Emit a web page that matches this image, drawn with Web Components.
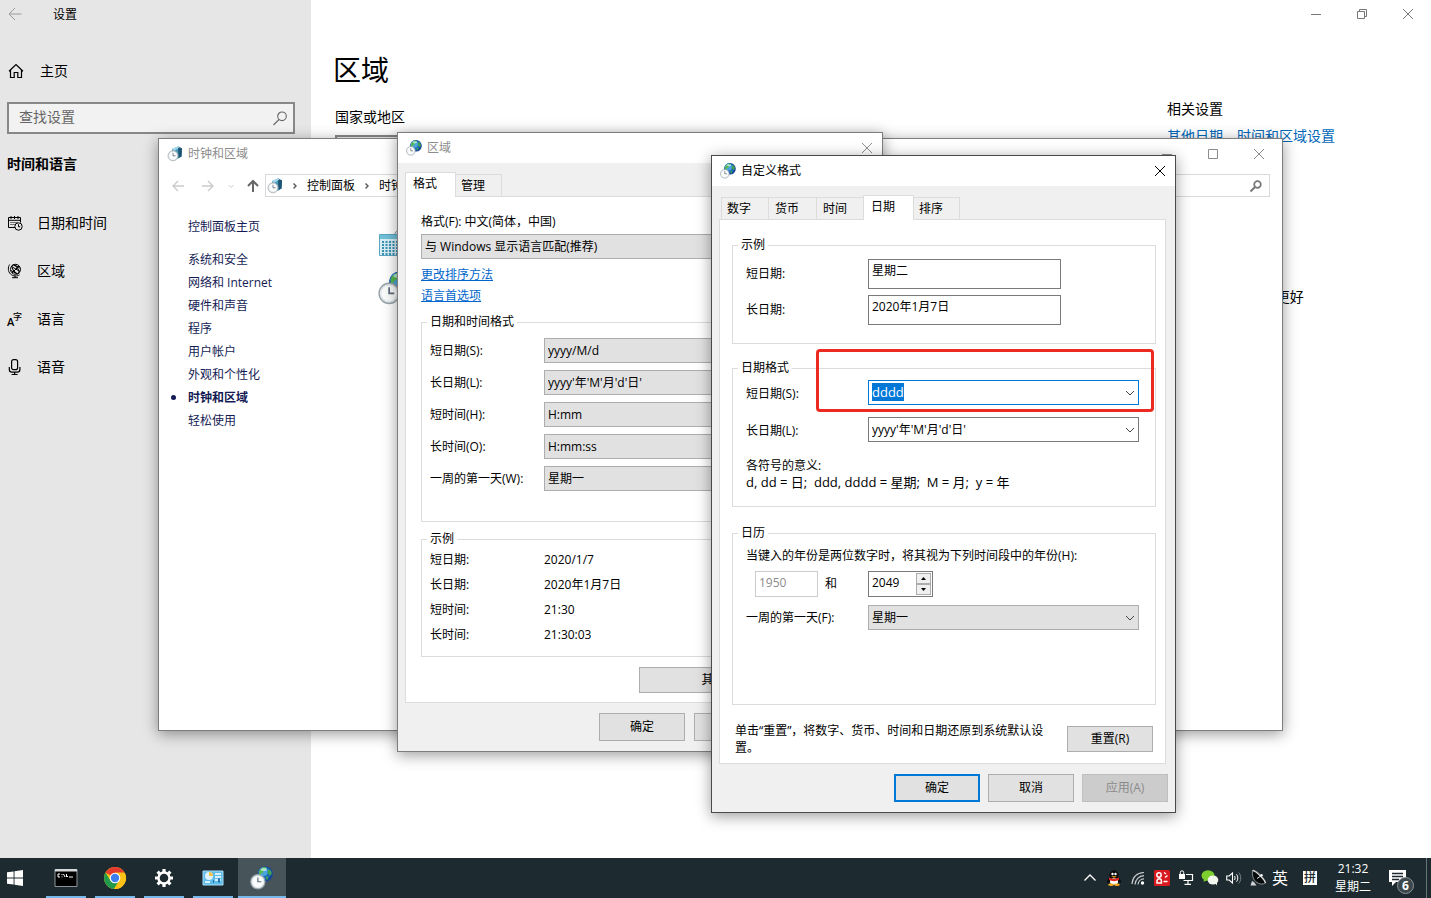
<!DOCTYPE html>
<html lang="zh-CN">
<head>
<meta charset="utf-8">
<title>设置</title>
<style>
  html, body { margin: 0; height: 100%; overflow: hidden; background: #fff; }
  body { font: 12px/18px "Open Sans", "Noto Sans CJK SC", sans-serif; color: #000; }
</style>
</head>
<body>
<desk-top></desk-top>
<script>
const BASE = `*{box-sizing:border-box} button,input,select{font:inherit;color:inherit;margin:0;border-radius:0;outline:0}
button{background:none;border:0;padding:0} a{color:inherit} [hidden]{display:none}`;

function define(name, css, html, setup) {
  const tpl = document.createElement('template');
  tpl.innerHTML = typeof html === 'string' ? `<style>${BASE}${css}</style>${html}` : '';
  customElements.define(name, class extends HTMLElement {
    connectedCallback() {
      if (this.shadowRoot) return;
      const root = this.attachShadow({ mode: 'open' });
      if (typeof html === 'string') root.append(tpl.content.cloneNode(true));
      else root.innerHTML = `<style>${BASE}${css}</style>${html(this)}`;
      if (setup) setup(this, root);
    }
  });
}

/* ---------- icons: [viewBox size, markup] ---------- */
const clockFace = (x, y, r) => `<circle cx="${x}" cy="${y}" r="${r}" fill="#e3e9ec" stroke="#9aa5ab" stroke-width="${r / 7}"/>
  <circle cx="${x}" cy="${y}" r="${r * .76}" fill="#fbfcfc"/>
  <path d="M${x} ${y - r * .6}V${y}H${x + r * .5}" fill="none" stroke="#5b6a78" stroke-width="${r / 6}"/>`;
const globe = (x, y, r) => `<circle cx="${x}" cy="${y}" r="${r}" fill="#14479a"/>
  <circle cx="${x - r * .12}" cy="${y - r * .12}" r="${r * .84}" fill="#1f6cbd"/>
  <circle cx="${x - r * .25}" cy="${y - r * .28}" r="${r * .58}" fill="#4aa5de"/>
  <g transform="translate(${x - r} ${y - r}) scale(${r / 10})"><path d="M1.500 7C3 3 7 .8 10 1l2 1.500-2 2-2 .5-1 3-2.500 1-1 3-2-.5z" fill="#55b84c"/>
  <path d="M13.500 4l3 .5 2 3.500-.5 3-2 1-3-3zM11 13l3 1-1 4-2-1z" fill="#3f9f52"/><ellipse cx="8" cy="4" rx="4" ry="2" fill="#d6f2fb" opacity=".7"/></g>`;
const line = (d, w = 1, extra = '') => `<path d="${d}" fill="none" stroke="currentColor" stroke-width="${w}" ${extra}/>`;
const ICONS = {
  back: [16, line('M14.5 8H2M8 2L2 8l6 6')],
  navback: [16, line('M14 8H3M8 3L3 8l5 5', 1.4)],
  navfwd: [16, line('M2 8h11M8 3l5 5-5 5', 1.4)],
  navup: [16, line('M8 14V3M3 8l5-5 5 5', 2)],
  minichev: [8, line('M1.500 3L4 5.500 6.500 3', 1)],
  crumb: [8, line('M2.500 1.500L5 4 2.500 6.500', 1.4)],
  min: [12, line('M1 6.500h10')],
  max: [12, line('M1.500 1.500h9v9h-9z')],
  restore: [12, line('M1.500 3.500h7v7h-7zM3.500 3.500v-2h7v7h-2')],
  close: [12, line('M1 1l10 10M11 1L1 11')],
  chev: [12, line('M2 4l4 4 4-4')],
  home: [16, line('M1 8.300L8 1.500l7 6.800M2.500 7v7.500h3.700V9.500h3.600v5h3.700V7', 1.2)],
  search: [16, line('M7 9.500L1.500 15', 1.1) + '<circle cx="10" cy="6.300" r="4.300" fill="none" stroke="currentColor" stroke-width="1.100"/>'],
  searchb: [14, line('M6 8L1.500 12.500', 2) + '<circle cx="8.500" cy="5.500" r="3.300" fill="none" stroke="currentColor" stroke-width="1.700"/>'],
  date: [16, line('M8.500 12.500H1.500v-10h12v5M1.500 5.300h12M4 1v3M7.500 1v3M11 1v3') + line('M3.500 7.500h7M3.500 9.500h5', 1, 'stroke-dasharray="1 1"') + '<circle cx="11.500" cy="11.500" r="3.700" fill="#e6e6e6" stroke="currentColor"/>' + line('M11.500 9.300v2.500h1.700')],
  region: [16, '<g fill="none" stroke="currentColor"><circle cx="8.500" cy="6.300" r="5"/><ellipse cx="8.500" cy="6.300" rx="2.300" ry="5" transform="rotate(-35 8.500 6.300)"/><path d="M4.500 3.500l8.500 5M3.800 7.500l6.500 3.500M7 1.500l5.800 3.500M12 3L5 10"/><path d="M2.700 1.500C.8 4 .8 8.500 3.500 11s6.500 2.500 9 .8M8 12.700v2M5 14.700h6"/></g>'],
  lang: [16, '<text x="0" y="15" font-size="11" font-weight="600" fill="currentColor" font-family="Open Sans">A</text><text x="6" y="9" font-size="9" fill="currentColor" font-weight="500" font-family="Noto Sans CJK SC">字</text>'],
  mic: [16, '<rect x="4.600" y=".7" width="6" height="10" rx="2" fill="none" stroke="currentColor" stroke-width="1.200"/>' + line('M2.300 8v2.500c0 1.700 1 2.700 2.600 2.700h5.400c1.600 0 2.600-1 2.600-2.700V8M7.600 13.200v2.300M4.600 15.500h6', 1.2)],
  clockregion: [16, globe(10, 5.800, 5.800) + clockFace(4.800, 10.800, 4.400)],
  clockbox: [16, '<path d="M5 3l6-2.500 4 2-.5 8-4 2.500-5-3z" fill="#4b9dbd"/><path d="M11 .5l4 2-.5 8-3 1.500z" fill="#1d5473"/><path d="M5 3l6-2.500 1.500 1L7 5z" fill="#a4d8e8"/>' + clockFace(6, 9.800, 5)],
  calendar: [32, '<circle cx="24" cy="10" r="8" fill="#e8eef0" stroke="#8f9ca3"/><path d="M1.500 7.500h26v21h-26z" fill="#d9eef6" stroke="#5aa5c0"/><path d="M2 8h25v4H2z" fill="#6fc0d8"/><path d="M4 15h20M4 18h20M4 21h20M4 24h20M4 27h20" stroke="#3992b4" stroke-width="2" stroke-dasharray="2 1.500"/>'],
  globeclock: [32, globe(20.500, 10.500, 10) + clockFace(10.500, 21, 9.500)],
  winlogo: [16, '<path d="M0 2.300L6.600 1.400v6.100H0zM7.500 1.300L16 0v7.500H7.500zM0 8.400h6.600v6.200L0 13.700zM7.500 8.400H16V16l-8.500-1.200z" fill="#fff"/>'],
  cmd: [24, '<path d="M1 3.500h22v17H1z" fill="#000" stroke="#8c9599"/><path d="M1 3h22v2.500H1z" fill="#d5d9db"/><path d="M6 8H4v3h2M8 8v1M8 10.500v.8M9.500 8l1.500 3M12.500 8v3M13 10.500h1M15 11h4" stroke="#fff" fill="none"/>'],
  chrome: [24, '<circle cx="12" cy="12" r="11" fill="#fbc116"/><path d="M12 12L2.500 6.500A11 11 0 0 1 21.500 6.500H12z" fill="#e33b2e"/><path d="M2.500 6.500A11 11 0 0 0 11 23l5.500-8.500L12 12 7.500 14.800z" fill="#229a4c"/><path d="M12 7h9.800A11 11 0 0 1 11 23l5.300-8.500z" fill="#fbc116"/><circle cx="12" cy="12" r="5.300" fill="#fff"/><circle cx="12" cy="12" r="4.200" fill="#3c7ef0"/>'],
  gear: [24, '<circle cx="12" cy="12" r="5.500" fill="none" stroke="#fff" stroke-width="2.400"/><g stroke="#fff" stroke-width="3.200"><path d="M12 3v3M12 18v3M3 12h3M18 12h3M5.600 5.600l2.200 2.200M16.200 16.200l2.200 2.200M18.400 5.600l-2.200 2.200M7.800 16.200l-2.200 2.200"/></g>'],
  panel: [24, '<path d="M2 5h20v14H2z" fill="#5fbdea" stroke="#a9def6"/><circle cx="8" cy="10" r="4" fill="#dff3fc"/><path d="M8 10V6a4 4 0 0 1 4 4z" fill="#f5c34a"/><path d="M14 8h6M14 11h6M14 14h6M4 16h5" stroke="#fff" stroke-width="1.500"/><path d="M17 12.500h2v4h-2zM12 14h1v3h-1z" fill="#1f73b7"/>'],
  up: [16, line('M2.500 10.500L8 5l5.500 5.500', 1.3)],
  qq: [16, '<ellipse cx="8" cy="5.500" rx="4.500" ry="5.300" fill="#0b0b0b"/><path d="M3 8c-2 2-2.500 4.500-1.500 5L4 12h8l2.500 1c1-.5.500-3-1.500-5z" fill="#0b0b0b"/><ellipse cx="8" cy="11.500" rx="4" ry="3.300" fill="#fff"/><circle cx="6.500" cy="4" r="1.200" fill="#fff"/><circle cx="9.500" cy="4" r="1.200" fill="#fff"/><path d="M5 6.300h6L8 7.800z" fill="#f5a81c"/><path d="M3 7.500c3 1.800 7 1.800 10 0v2.500c-3 1.500-7 1.500-10 0z" fill="#e5261f"/><ellipse cx="5" cy="14.800" rx="2.800" ry="1.200" fill="#f5a81c"/><ellipse cx="11" cy="14.800" rx="2.800" ry="1.200" fill="#f5a81c"/>'],
  wifi: [16, '<g fill="none" stroke="#c8cdcf" stroke-width="1.200"><path d="M2 14C2.500 7 7 3 14 2.500"/><path d="M5 14.500C5.300 9.500 9 6 14 5.700"/><path d="M8 14.500C8.200 11.500 10.500 9 14 8.900"/></g><circle cx="12.500" cy="13" r="1.700" fill="#fff"/>'],
  red: [16, '<rect width="16" height="16" rx="1.500" fill="#d8191f"/><g fill="none" stroke="#fff" stroke-width="1.500"><circle cx="5" cy="5" r="2.200"/><path d="M10 2.500l2 1.500M13.500 5.500l-2.500 2M3 13v-2a2.200 2.200 0 0 1 4.400 0v2zM9.500 11.500h4"/></g>'],
  net: [16, '<g fill="none" stroke="#fff" stroke-width="1.200"><path d="M8 4.500h6.500v6H5.500M10 10.500v3.500M6.500 14.400h6.500"/></g><path d="M1 4h6v5H1z" fill="#fff"/><path d="M2.300 4.500V2.500a1.700 1.700 0 0 1 3.400 0v2" stroke="#fff" fill="none"/>'],
  wechat: [18, '<ellipse cx="7" cy="6.500" rx="6.500" ry="5.300" fill="#7ccf2e"/><path d="M3 10l-.500 3L6 11z" fill="#7ccf2e"/><ellipse cx="12" cy="11" rx="5.300" ry="4.500" fill="#f2f7ee"/><path d="M14 14l2 2.500V13z" fill="#f2f7ee"/>'],
  vol: [16, line('M.7 6h2.500L6.500 3v10L3.200 10H.7z', 1.1) + line('M8.500 6c.8 1.200.8 2.800 0 4M10.500 4.300c1.800 2.200 1.800 5.200 0 7.400', 1) + '<path d="M12.700 2.500c2.700 3.200 2.700 7.800 0 11" stroke="#76828a" fill="none"/>'],
  dish: [18, '<path d="M4 1C2.500 6 4 11 8 13.500c3 2 6 2 8.500.5C17 11 9 2 4 1z" fill="#070a0b" stroke="#b9bfc2" stroke-width=".7"/><path d="M3.500 1.500C7 2 15 10 16.500 14" fill="none" stroke="#eee" stroke-width="1.100"/><path d="M8 9.500l4.500-3" stroke="#ddd"/><circle cx="12.500" cy="6.300" r="1.200" fill="#fff"/><path d="M3 12l-1.500 4.500h6L5 13z" fill="#cfd3d5"/>'],
  note: [20, '<path d="M1 2h17v12H8l-4 4v-4H1z" fill="#fff"/><path d="M4 5.500h11M4 8.500h11M4 11.500h7" stroke="#1d2b30" stroke-width="1.300"/>']
};
define('ui-icon', ':host{display:inline-block;flex:none;line-height:0}svg{display:block;overflow:visible}', el => {
  const [box, body] = ICONS[el.getAttribute('name')];
  const size = el.getAttribute('size') || box;
  return `<svg width="${size}" height="${size}" viewBox="0 0 ${box} ${box}" aria-hidden="true">${body}</svg>`;
});

/* ---------- shared window parts ---------- */
define('win-frame', `
  :host{display:flex;flex-direction:column;background:var(--body,#f0f0f0);border:1px solid var(--edge,#7d7d7d);box-shadow:0 3px 14px rgba(0,0,0,.4)}
  header{display:flex;align-items:center;height:30px;flex:none;background:#fff;padding-left:8px;gap:5px;color:var(--title,#8c8c8c)}
  h2{font:inherit;margin:0;flex:1}
  header>ui-icon{margin-bottom:1px}
  .ctl{display:flex}
  button{width:var(--ctl,30px);height:29px;display:grid;place-items:center}
  main{flex:1;display:flex;flex-direction:column;min-height:0}`,
  el => `<header><ui-icon name="${el.getAttribute('icon')}"></ui-icon><h2>${el.getAttribute('heading')}</h2>
    <div class="ctl">${(el.getAttribute('controls') || 'close').split(' ').map(c => `<button aria-label="${c}"><ui-icon name="${c}"></ui-icon></button>`).join('')}</div></header>
    <main><slot></slot></main>`);

define('tab-page', `
  :host{display:flex;flex-direction:column;flex:1;margin:9px 9px 0 7px}
  nav{display:flex;align-items:flex-end;height:24px;padding-left:2px}
  button{height:22px;border:1px solid #dcdcdc;border-bottom:0;padding:0 17px 0 5px;text-align:left;line-height:21px}
  button+button{border-left:0;padding-left:6px}
  button.on{position:relative;height:25px;margin:0 -2px -1px;padding:0 18px 3px 7px;background:#fff;border-left:1px solid #dcdcdc}
  button.on+button{padding-left:7px;padding-right:16px}
  section{flex:1;border:1px solid #dcdcdc;background:#fff;padding:var(--pad);display:flex;flex-direction:column}`,
  el => `<nav role="tablist">${el.getAttribute('tabs').split(' ').map(t => {
    const on = t === el.getAttribute('active');
    return `<button role="tab" aria-selected="${on}" class="${on ? 'on' : ''}">${t}</button>`; }).join('')}</nav><section><slot></slot></section>`);

define('group-box', `
  :host{display:block}
  fieldset{margin:0;min-width:0;height:100%;border:1px solid #dcdcdc;padding:0 5px}
  legend{padding:0 3px;line-height:16px}
  div{display:flex;flex-direction:column;padding:var(--inset)}`,
  el => `<fieldset><legend>${el.getAttribute('legend')}</legend><div><slot></slot></div></fieldset>`);

define('push-button', `
  :host{display:block;width:86px;height:28px}
  button{width:100%;height:100%;background:#e1e1e1;border:1px solid #adadad;line-height:18px}
  :host([primary]) button{border:2px solid #0078d7}
  button:disabled{background:#ccc;border-color:#bfbfbf;color:#8b8b8b}`,
  el => `<button ${el.hasAttribute('off') ? 'disabled' : ''}><slot></slot></button>`);

define('form-row', `
  :host{display:grid;grid-template-columns:var(--label,122px) 1fr;align-items:center}
  :host([kind=combo]) label{padding-top:3px}
  .box{display:grid;width:var(--control,auto);height:25px}
  .box>*{grid-area:1/1}
  .box ui-icon{justify-self:end;align-self:center;margin-right:3px;color:#444;pointer-events:none}
  select{appearance:none;width:100%;height:25px;background:#e1e1e1;border:1px solid #adadad;padding:0 20px 0 3px}
  input{width:100%;height:25px;background:#fff;border:1px solid #7a7a7a;padding:0 20px 2px 3px}
  input.focus{border-color:#0078d7;font-size:13px}
  input::selection{background:#0078d7;color:#fff}
  .sample input{padding:0 3px 8px;height:30px}
  .sample{width:193px;height:30px}
  .box button{width:20px;justify-self:end}
  output{display:block;line-height:25px}`,
  el => {
    const label = el.getAttribute('label'), value = el.getAttribute('value'), kind = el.getAttribute('kind') || 'select';
    const control = {
      select: `<div class="box"><select id="c"><option>${value}</option></select><ui-icon name="chev"></ui-icon></div>`,
      combo: `<div class="box"><input id="c" type="text" value="${value}" role="combobox" aria-expanded="false"><button aria-label="展开"></button><ui-icon name="chev"></ui-icon></div>`,
      sample: `<div class="box sample"><input id="c" type="text" readonly value="${value}"></div>`,
      text: `<output id="c">${value}</output>`
    }[kind];
    return `<label for="c">${label}</label>${control}`;
  },
  (el, root) => {
    if (!el.hasAttribute('selected')) return;
    const input = root.querySelector('input');
    input.classList.add('focus');
    input.focus();
    input.select();
  });

define('year-range', `
  :host{display:grid;grid-template-columns:122px 1fr;align-items:center}
  .from{display:flex;align-items:center;gap:7px;padding-left:9px}
  input{height:26px;border:1px solid #7a7a7a;background:#fff;padding:0 3px 4px}
  .from input{width:63px;border-color:#ccc;color:#8b8b8b}
  .spin{display:flex;width:65px;height:26px;border:1px solid #7a7a7a}
  .spin input{flex:1;width:0;height:24px;border:0}
  .keys{display:grid;grid-template-rows:1fr 1fr;width:17px;padding:1px}
  .keys button{background:#f0f0f0;border:1px solid #adadad;display:grid;place-items:center}
  svg{display:block}`,
  `<div class="from"><input type="text" value="1950" disabled aria-label="起始年份"><label for="y">和</label></div>
   <div class="spin"><input id="y" type="text" value="2049"><div class="keys">
   <button aria-label="增加"><svg width="5" height="3"><path d="M0 3L2.500 0 5 3z"/></svg></button>
   <button aria-label="减少"><svg width="5" height="3"><path d="M0 0h5L2.500 3z"/></svg></button></div></div>`);

/* ---------- settings window ---------- */
define('nav-item', `
  :host{display:block;height:48px}
  a{display:flex;align-items:center;gap:14px;height:100%;padding-left:7px;text-decoration:none;font-size:14px}`,
  el => `<a href="#"><ui-icon name="${el.getAttribute('icon')}"></ui-icon><slot></slot></a>`);

define('settings-app', `
  :host{display:flex;font-size:14px;line-height:20px;background:#fff}
  .side{width:311px;background:#e6e6e6;flex:none}
  .cap{display:flex;align-items:center;height:28px;padding-left:7px;gap:30px;font-size:12px}
  .cap ui-icon{color:#999}
  .cap span{padding-top:1px}
  .home{display:flex;align-items:center;height:48px;margin-top:19px;padding-left:8px;gap:16px;text-decoration:none}
  .find{display:flex;align-items:center;height:32px;margin:7px 16px 20px 7px;border:2px solid #888;background:#f2f2f2;padding:0 5px 0 10px;color:#666}
  .find input{flex:1;min-width:0;border:0;background:none;padding:0 0 2px}
  .find input::placeholder{color:#666;opacity:1}
  h3{margin:0 0 25px 7px;font-size:14px;line-height:20px;font-weight:700}
  .page{flex:1;display:flex;flex-direction:column;min-width:0}
  .ctl{display:flex;justify-content:flex-end;height:28px;color:#777}
  .ctl button{width:46px;display:grid;place-items:center}
  .cols{display:flex;flex:1}
  .body{flex:1;padding-left:24px}
  h1{font-size:28px;line-height:40px;font-weight:400;margin:22px 0 17px -2px}
  .body select{display:block;appearance:none;width:280px;height:32px;margin-top:8px;border:2px solid #888;background:#f2f2f2}
  aside{width:264px;padding-top:71px}
  aside p{margin:0}
  aside a{display:block;color:#0067b8;text-decoration:none;margin:7px 0 141px}`,
  `<div class="side">
     <div class="cap"><ui-icon name="back"></ui-icon><span>设置</span></div>
     <a class="home" href="#"><ui-icon name="home"></ui-icon>主页</a>
     <div class="find"><input type="text" placeholder="查找设置" aria-label="查找设置"><ui-icon name="search"></ui-icon></div>
     <h3>时间和语言</h3>
     <nav><nav-item icon="date">日期和时间</nav-item><nav-item icon="region">区域</nav-item><nav-item icon="lang">语言</nav-item><nav-item icon="mic">语音</nav-item></nav>
   </div>
   <div class="page">
     <div class="ctl"><button aria-label="最小化"><ui-icon name="min"></ui-icon></button><button aria-label="还原"><ui-icon name="restore"></ui-icon></button><button aria-label="关闭"><ui-icon name="close"></ui-icon></button></div>
     <div class="cols">
       <div class="body"><h1>区域</h1><label for="country">国家或地区</label><select id="country"></select></div>
       <aside><p>相关设置</p><a href="#">其他日期、时间和区域设置</a><p>使 Windows 变得更好</p></aside>
     </div>
   </div>`);

/* ---------- control panel window ---------- */
define('control-panel', `
  :host{display:block}
  win-frame{height:100%;--body:#fff;--ctl:46px}
  .bar{display:flex;margin:5px 12px 0 11px;height:23px;color:#ccc}
  .keys{display:flex;align-items:center;gap:14px;width:95px;flex:none}
  .keys button{display:grid}
  .keys button:nth-child(3){margin:0 -4px 0 -3px}
  .keys button:nth-child(4){color:#666}
  .addr{flex:1;display:flex;align-items:center;gap:8px;border:1px solid #d9d9d9;padding-left:1px;color:#000;white-space:nowrap}
  .addr ui-icon[name=crumb]{color:#555}
  .addr a{text-decoration:none}
  .find{display:flex;align-items:center;width:200px;border:1px solid #d9d9d9;margin-left:12px;padding-right:6px;color:#777}
  .find input{flex:1;min-width:0;border:0;background:none}
  .cols{display:flex}
  nav{width:219px;padding:18px 0 0 29px;line-height:23px;color:#151c55}
  nav a{display:block;text-decoration:none;width:max-content}
  nav a:first-child{margin-bottom:10px}
  nav .on{font-weight:700;display:flex;align-items:center;margin-left:-17px;gap:12px}
  nav .on::before{content:"";width:5px;height:5px;border-radius:50%;background:#151c55}
  .apps{display:flex;flex-direction:column;gap:12px;padding-top:30px}`,
  `<win-frame icon="clockbox" heading="时钟和区域" controls="min max close">
    <div class="bar"><div class="keys"><button aria-label="后退"><ui-icon name="navback"></ui-icon></button><button aria-label="前进"><ui-icon name="navfwd"></ui-icon></button><button aria-label="最近"><ui-icon name="minichev"></ui-icon></button><button aria-label="向上"><ui-icon name="navup"></ui-icon></button></div>
      <div class="addr"><ui-icon name="clockbox"></ui-icon><ui-icon name="crumb"></ui-icon><a href="#">控制面板</a><ui-icon name="crumb"></ui-icon><a href="#">时钟和区域</a></div>
      <div class="find"><input type="text" aria-label="搜索控制面板"><ui-icon name="searchb"></ui-icon></div></div>
    <div class="cols"><nav><a href="#">控制面板主页</a><a href="#">系统和安全</a><a href="#">网络和 Internet</a><a href="#">硬件和声音</a><a href="#">程序</a><a href="#">用户帐户</a><a href="#">外观和个性化</a><a href="#" class="on">时钟和区域</a><a href="#">轻松使用</a></nav>
      <div class="apps"><ui-icon name="calendar"></ui-icon><ui-icon name="globeclock" size="34"></ui-icon></div></div>
  </win-frame>`);

/* ---------- region dialog ---------- */
define('region-dialog', `
  :host{display:block}
  win-frame{height:100%}
  tab-page{--pad:16px 15px 9px}
  .fmt select{appearance:none;display:block;width:100%;height:25px;margin:3px 0 5px;background:#e1e1e1;border:1px solid #adadad;padding:0 3px}
  .links a{display:block;width:max-content;line-height:21px;color:#0066cc}
  form-row{--label:114px}
  .a{margin-top:8px;height:208px;--inset:8px 3px 0}
  .a form-row+form-row{margin-top:7px}
  .b{margin-top:9px;height:126px;--inset:0 3px}
  .more{width:198px;height:26px;margin:10px 20px 0 auto}
  footer{display:flex;justify-content:flex-end;gap:9px;padding:10px 7px}`,
  `<win-frame icon="clockregion" heading="区域">
    <tab-page tabs="格式 管理" active="格式">
      <div class="fmt"><label for="f">格式(F): 中文(简体，中国)</label><select id="f"><option>与 Windows 显示语言匹配(推荐)</option></select></div>
      <div class="links"><a href="#">更改排序方法</a><a href="#">语言首选项</a></div>
      <group-box class="a" legend="日期和时间格式">
        <form-row label="短日期(S):" value="yyyy/M/d"></form-row><form-row label="长日期(L):" value="yyyy'年'M'月'd'日'"></form-row>
        <form-row label="短时间(H):" value="H:mm"></form-row><form-row label="长时间(O):" value="H:mm:ss"></form-row>
        <form-row label="一周的第一天(W):" value="星期一"></form-row>
      </group-box>
      <group-box class="b" legend="示例">
        <form-row kind="text" label="短日期:" value="2020/1/7"></form-row><form-row kind="text" label="长日期:" value="2020年1月7日"></form-row>
        <form-row kind="text" label="短时间:" value="21:30"></form-row><form-row kind="text" label="长时间:" value="21:30:03"></form-row>
      </group-box>
      <push-button class="more">其他设置(D)...</push-button>
    </tab-page>
    <footer><push-button>确定</push-button><push-button>取消</push-button><push-button>应用(A)</push-button></footer>
  </win-frame>`);

/* ---------- customize format dialog ---------- */
define('format-dialog', `
  :host{display:block}
  win-frame{height:100%;--title:#000;--edge:#4a4a4a}
  tab-page{--pad:17px 9px 6px 12px}
  .a{--inset:6px 8px 18px}
  .a form-row+form-row{margin-top:6px}
  .b{margin-top:16px;--inset:4px 11px 15px 8px}
  .b form-row+form-row{margin-top:12px}
  .c{margin-top:18px;height:180px;--inset:6px 11px 0 8px}
  .help{margin:0;line-height:17px;white-space:pre}
  .lead{margin-top:15px}
  .key{font-size:13px}
  .c p{margin:0 0 6px}
  .c form-row{margin-top:8px}
  .reset{display:flex;align-items:center;justify-content:space-between;padding:0 3px;margin-top:17px}
  .reset p{margin:0;width:312px;line-height:17px}
  .reset push-button{height:26px}
  footer{display:flex;justify-content:flex-end;gap:8px;padding:10px 7px}
  .mark{position:absolute;left:105px;top:194px;width:338px;height:63px;border:3px solid #ec2a22;border-radius:4px;pointer-events:none}`,
  `<win-frame icon="clockregion" heading="自定义格式">
    <tab-page tabs="数字 货币 时间 日期 排序" active="日期">
      <group-box class="a" legend="示例"><form-row kind="sample" label="短日期:" value="星期二"></form-row><form-row kind="sample" label="长日期:" value="2020年1月7日"></form-row></group-box>
      <group-box class="b" legend="日期格式"><form-row kind="combo" selected label="短日期(S):" value="dddd"></form-row><form-row kind="combo" label="长日期(L):" value="yyyy'年'M'月'd'日'"></form-row>
        <p class="help lead">各符号的意义:</p><p class="help key">d, dd = 日;  ddd, dddd = 星期;  M = 月;  y = 年</p></group-box>
      <group-box class="c" legend="日历"><p>当键入的年份是两位数字时，将其视为下列时间段中的年份(H):</p><year-range></year-range><form-row label="一周的第一天(F):" value="星期一"></form-row></group-box>
      <div class="reset"><p>单击“重置”，将数字、货币、时间和日期还原到系统默认设置。</p><push-button>重置(R)</push-button></div>
    </tab-page>
    <footer><push-button primary>确定</push-button><push-button>取消</push-button><push-button off>应用(A)</push-button></footer>
  </win-frame><div class="mark"></div>`);

/* ---------- task bar ---------- */
define('task-bar', `
  :host{display:flex;justify-content:space-between;height:40px;background:#1d2b30;color:#fff}
  .apps,.tray{display:flex}
  button{display:grid;place-items:center}
  .start{width:30px;margin-right:12px}
  .app{width:48px;margin-right:1px;position:relative}
  .app::after{content:"";position:absolute;left:4px;right:4px;bottom:0;height:2px;background:#76b9ed}
  .app.on{background:#47545a}
  .app.on::after{left:0;right:0}
  .t{width:24px}
  .ime{width:20px;font-size:16px}
  .pin{width:40px}
  .pin span{width:14px;height:14px;background:#fff;color:#1d2b30;line-height:14px;font-weight:500}
  .clock{width:46px;line-height:18px;white-space:nowrap}
  .note{width:50px;position:relative;padding-right:6px}
  .note b{position:absolute;left:21px;top:19px;width:17px;height:17px;border-radius:50%;background:#3c474c;border:1px solid #8b9397;font-size:12px;line-height:15px}
  .peek{width:5px;border-left:1px solid #66737a}`,
  `<div class="apps"><button class="start" aria-label="开始"><ui-icon name="winlogo"></ui-icon></button>
    ${['cmd', 'chrome', 'gear', 'panel'].map(n => `<button class="app" aria-label="${n}"><ui-icon name="${n}"></ui-icon></button>`).join('')}
    <button class="app on" aria-label="区域"><ui-icon name="globeclock" size="24"></ui-icon></button></div>
   <div class="tray">${['up', 'qq', 'wifi', 'red', 'net', 'wechat', 'vol', 'dish'].map(n => `<button class="t" aria-label="${n}"><ui-icon name="${n}"></ui-icon></button>`).join('')}
    <button class="ime">英</button><button class="pin"><span>拼</span></button>
    <button class="clock"><span>21:32<br>星期二</span></button>
    <button class="note" aria-label="通知"><ui-icon name="note"></ui-icon><b>6</b></button><button class="peek" aria-label="显示桌面"></button></div>`);

/* ---------- desktop: windows sit freely on it ---------- */
define('desk-top', `
  :host{display:grid;grid-template-rows:1fr auto;height:100vh}
  .area{position:relative;overflow:hidden;display:grid}
  control-panel,region-dialog,format-dialog{position:absolute}
  control-panel{left:158px;top:138px;width:1125px;height:593px}
  region-dialog{left:397px;top:132px;width:486px;height:620px}
  format-dialog{left:711px;top:155px;width:465px;height:658px}`,
  `<div class="area"><settings-app></settings-app><control-panel></control-panel><region-dialog></region-dialog><format-dialog></format-dialog></div><task-bar></task-bar>`);
</script>
</body>
</html>
